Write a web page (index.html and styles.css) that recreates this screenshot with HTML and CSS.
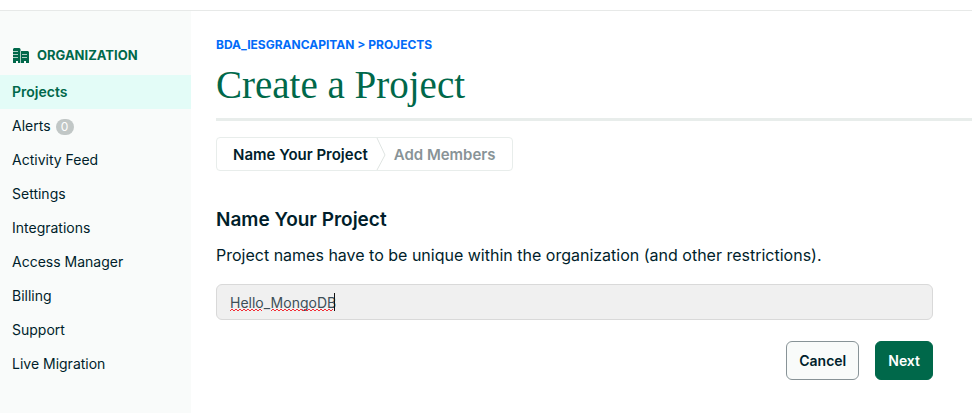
FILE: index.html
```html
<!DOCTYPE html>
<html lang="en">
<head>
<meta charset="utf-8">
<title>Create a Project</title>
<link rel="stylesheet" href="styles.css">
</head>
<body>
<header class="topbar"></header>
<div class="shell">
  <nav class="sidebar" aria-label="Organization">
    <h2 class="sidebar-title">
      <svg class="org-icon" viewBox="0 0 17 15" aria-hidden="true">
        <path fill="currentColor" d="M1 0h5.500l1 1v2H15l1 1v11h-3v-2h-2v2H5v-2H3v2H0V1z"/>
        <path stroke="#f9fbfa" stroke-width="1" d="M0 3.500h5M0 6.500h5M0 9.500h5M9 6.500h5M9 9.500h5M7.500 3v12" opacity=".7"/>
      </svg>
      ORGANIZATION
    </h2>
    <a class="nav-item active" href="#">Projects</a>
    <a class="nav-item" href="#">Alerts <span class="badge">0</span></a>
    <a class="nav-item" href="#">Activity Feed</a>
    <a class="nav-item" href="#">Settings</a>
    <a class="nav-item" href="#">Integrations</a>
    <a class="nav-item" href="#">Access Manager</a>
    <a class="nav-item" href="#">Billing</a>
    <a class="nav-item" href="#">Support</a>
    <a class="nav-item" href="#">Live Migration</a>
  </nav>
  <main class="content">
    <div class="page-head">
      <div class="crumbs"><a href="#">BDA_IESGRANCAPITAN</a> &gt; <a href="#">PROJECTS</a></div>
      <h1>Create a Project</h1>
    </div>
    <ol class="steps">
      <li class="current">Name Your Project</li>
      <li class="divider" aria-hidden="true"><svg viewBox="0 0 10 32"><path d="M1 0l8 17-8 15" fill="none" stroke="#dfe4e2"/></svg></li>
      <li>Add Members</li>
    </ol>
    <form class="project-form">
      <label class="form-title" for="name">Name Your Project</label>
      <p class="hint">Project names have to be unique within the organization (and other restrictions).</p>
      <div class="field">
        <input id="name" type="text" value="Hello_MongoDB" spellcheck="false">
        <svg class="marks" viewBox="0 0 108 20" aria-hidden="true">
          <path fill="none" stroke="#f22c35" d="M0 18l2-2 2 2 2-2 2 2 2-2 2 2 2-2 2 2 2-2 2 2 2-2 2 2 2-2 2 2 2-2 2 2M41 18l2-2 2 2 2-2 2 2 2-2 2 2 2-2 2 2 2-2 2 2 2-2 2 2 2-2 2 2 2-2 2 2 2-2 2 2 2-2 2 2 2-2 2 2 2-2 2 2 2-2 2 2 2-2 2 2 2-2 2 2 2-2"/>
          <path d="M104.500 0v18" stroke="#111"/>
        </svg>
      </div>
      <div class="actions">
        <button class="btn" type="button">Cancel</button>
        <button class="btn primary" type="button">Next</button>
      </div>
    </form>
  </main>
</div>
</body>
</html>
```
FILE: styles.css
```css
* { box-sizing: border-box; }

body {
  margin: 0;
  min-height: 100vh;
  display: flex;
  flex-direction: column;
  background: #fff;
  color: #001e2b;
  font-family: Inter, "Liberation Sans", sans-serif;
}

a { color: inherit; text-decoration: none; }

.topbar { height: 11px; border-bottom: 1px solid #e7e9e8; }

.shell { flex: 1; display: flex; }

.sidebar {
  flex: 0 0 191px;
  padding-top: 34px;
  background: #f9fbfa;
}

.sidebar-title {
  display: flex;
  align-items: center;
  gap: 7px;
  height: 20px;
  margin: 0 0 10px;
  padding-left: 13px;
  color: #00684a;
  font-size: 13px;
  font-weight: 700;
}

.org-icon { width: 17px; height: 15px; }

.nav-item {
  display: flex;
  align-items: center;
  gap: 5px;
  height: 34px;
  padding: 0 0 2px 12px;
  font-size: 14px;
}

.nav-item.active {
  background: #e3fcf7;
  color: #00684a;
  font-weight: 600;
}

.badge {
  width: 18px;
  margin-top: 3px;
  border-radius: 8px;
  background: #c1c7c6;
  color: #fff;
  font-size: 12px;
  line-height: 16px;
  text-align: center;
}

.content {
  flex: 1;
  padding: 25px 0 0 25px;
}

.page-head {
  padding-bottom: 11px;
  border-bottom: 3px solid #e8edeb;
}

.crumbs {
  color: #016bf8;
  font-size: 12px;
  font-weight: 700;
  line-height: 18px;
}

h1 {
  margin: 8px 0 0;
  color: #00684a;
  font-family: "Liberation Serif", serif;
  font-size: 39px;
  font-weight: 400;
  line-height: 45px;
}

.steps {
  display: flex;
  width: fit-content;
  align-items: center;
  height: 34px;
  margin: 16px 0 0;
  padding: 0 16px;
  border: 1px solid #e8edeb;
  border-radius: 4px;
  color: #889397;
  font-size: 15px;
  font-weight: 600;
  list-style: none;
}

.steps .current { color: #001e2b; }
.divider { margin: 0 8px; }
.divider svg { display: block; width: 10px; height: 32px; }

.project-form { margin: 35px 39px 0 0; }

.form-title {
  display: block;
  font-size: 19px;
  font-weight: 600;
  line-height: 28px;
}

.hint { margin: 9px 0 17px; font-size: 16px; line-height: 24px; }

.field { position: relative; }

.field input {
  display: block;
  width: 100%;
  height: 36px;
  padding: 0 13px;
  border: 1px solid #d9d9d9;
  border-radius: 6px;
  background: #f0f0f0;
  color: #3d4f58;
  font: 14px Inter, "Liberation Sans", sans-serif;
}

.marks {
  position: absolute;
  top: 9px;
  left: 14px;
  width: 108px;
  height: 20px;
  pointer-events: none;
}

.actions {
  display: flex;
  justify-content: flex-end;
  gap: 16px;
  margin-top: 21px;
}

.btn {
  height: 39px;
  padding: 0 12px;
  border: 1px solid #889397;
  border-radius: 6px;
  background: #f9fbfa;
  color: #001e2b;
  font: 600 14px Inter, "Liberation Sans", sans-serif;
}

.btn.primary {
  border-color: #00684a;
  background: #00684a;
  color: #fff;
}
```
